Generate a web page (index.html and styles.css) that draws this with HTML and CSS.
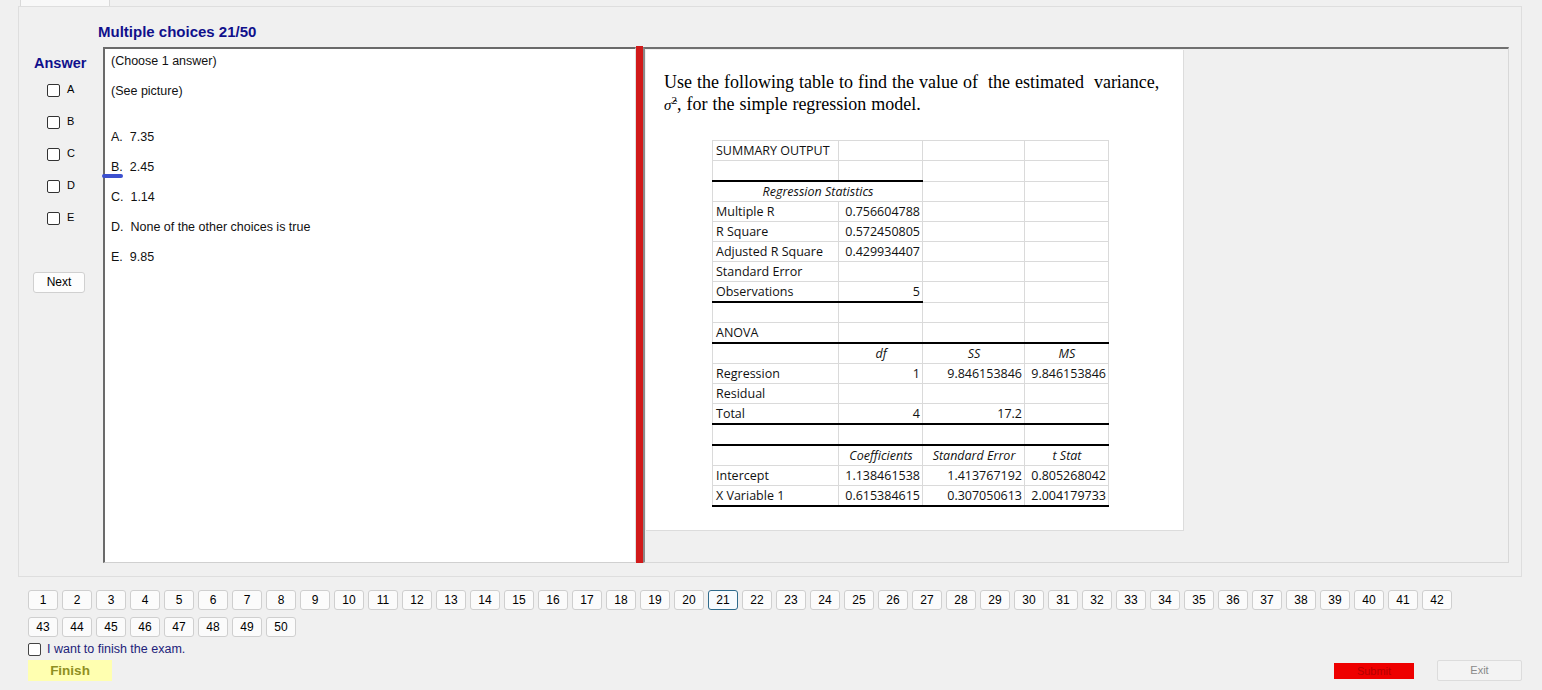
FILE: index.html
```html
<!DOCTYPE html>
<html>
<head>
<meta charset="utf-8">
<link rel="stylesheet" href="styles.css">
</head>
<body>
<div class="tabs"><div class="tab"></div></div>
<div class="panel">
  <div class="title">Multiple choices 21/50</div>
  <div class="work">
    <div class="answers">
      <div class="answer-label">Answer</div>
      <div class="checks">
        <label class="check"><span class="box"></span><span class="letter">A</span></label>
        <label class="check"><span class="box"></span><span class="letter">B</span></label>
        <label class="check"><span class="box"></span><span class="letter">C</span></label>
        <label class="check"><span class="box"></span><span class="letter">D</span></label>
        <label class="check"><span class="box"></span><span class="letter">E</span></label>
      </div>
      <div class="btn next">Next</div>
    </div>
    <div class="question">
      <div class="line">(Choose 1 answer)</div>
      <div class="line">(See picture)</div>
      <div class="options">
        <div class="line">A.&nbsp; 7.35</div>
        <div class="line">B.&nbsp; 2.45</div>
        <div class="line">C.&nbsp; 1.14</div>
        <div class="line">D.&nbsp; None of the other choices is true</div>
        <div class="line">E.&nbsp; 9.85</div>
      </div>
      <span class="ink"></span>
    </div>
    <div class="splitter"></div>
    <div class="picture-pane">
      <div class="picture">
        <div class="prompt">Use the following table to find the value of&nbsp; the estimated&nbsp; variance,<br><span class="sig">σ̂<sup>2</sup></span>, for the simple regression model.</div>
        <table class="sheet">
          <colgroup><col class="c1"><col class="c2"><col class="c3"><col class="c4"></colgroup>
          <tr><td>SUMMARY OUTPUT</td><td></td><td></td><td></td></tr>
          <tr><td></td><td></td><td></td><td></td></tr>
          <tr class="tt"><td colspan="2" class="hd">Regression Statistics</td><td class="nb"></td><td></td></tr>
          <tr><td>Multiple R</td><td class="n">0.756604788</td><td></td><td></td></tr>
          <tr><td>R Square</td><td class="n">0.572450805</td><td></td><td></td></tr>
          <tr><td>Adjusted R Square</td><td class="n">0.429934407</td><td></td><td></td></tr>
          <tr><td>Standard Error</td><td class="n"></td><td></td><td></td></tr>
          <tr class="bb2"><td>Observations</td><td class="n">5</td><td class="nb"></td><td></td></tr>
          <tr><td></td><td></td><td></td><td></td></tr>
          <tr><td>ANOVA</td><td></td><td></td><td></td></tr>
          <tr class="ta"><td></td><td class="hd">df</td><td class="hd">SS</td><td class="hd">MS</td></tr>
          <tr><td>Regression</td><td class="n">1</td><td class="n">9.846153846</td><td class="n">9.846153846</td></tr>
          <tr><td>Residual</td><td></td><td></td><td></td></tr>
          <tr class="ba"><td>Total</td><td class="n">4</td><td class="n">17.2</td><td></td></tr>
          <tr><td></td><td></td><td></td><td></td></tr>
          <tr class="ta"><td></td><td class="hd">Coefficients</td><td class="hd">Standard Error</td><td class="hd">t Stat</td></tr>
          <tr><td>Intercept</td><td class="n">1.138461538</td><td class="n">1.413767192</td><td class="n">0.805268042</td></tr>
          <tr class="ba"><td>X Variable 1</td><td class="n">0.615384615</td><td class="n">0.307050613</td><td class="n">2.004179733</td></tr>
        </table>
      </div>
    </div>
  </div>
</div>
<div class="footer">
  <div class="numbers">
    <div class="num">1</div><div class="num">2</div><div class="num">3</div><div class="num">4</div><div class="num">5</div><div class="num">6</div><div class="num">7</div><div class="num">8</div><div class="num">9</div><div class="num">10</div>
    <div class="num">11</div><div class="num">12</div><div class="num">13</div><div class="num">14</div><div class="num">15</div><div class="num">16</div><div class="num">17</div><div class="num">18</div><div class="num">19</div><div class="num">20</div>
    <div class="num current">21</div><div class="num">22</div><div class="num">23</div><div class="num">24</div><div class="num">25</div><div class="num">26</div><div class="num">27</div><div class="num">28</div><div class="num">29</div><div class="num">30</div>
    <div class="num">31</div><div class="num">32</div><div class="num">33</div><div class="num">34</div><div class="num">35</div><div class="num">36</div><div class="num">37</div><div class="num">38</div><div class="num">39</div><div class="num">40</div>
    <div class="num">41</div><div class="num">42</div><div class="num">43</div><div class="num">44</div><div class="num">45</div><div class="num">46</div><div class="num">47</div><div class="num">48</div><div class="num">49</div><div class="num">50</div>
  </div>
  <label class="finish-check"><span class="box"></span><span>I want to finish the exam.</span></label>
  <div class="actions">
    <div class="finish">Finish</div>
    <div class="submit">Submit</div>
    <div class="exit">Exit</div>
  </div>
</div>
</body>
</html>
```
FILE: styles.css
```css
html, body {
  margin: 0;
  padding: 0;
}
body {
  width: 1542px;
  height: 690px;
  overflow: hidden;
  background: #f0f0f0;
  font-family: "Liberation Sans", Arial, sans-serif;
  color: #000;
}
.tabs {
  height: 6px;
  display: flex;
}
.tab {
  margin-left: 20px;
  width: 90px;
  height: 6px;
  background: #f8f8f8;
  border-left: 1px solid #d9d9d9;
  border-right: 1px solid #d9d9d9;
  box-sizing: border-box;
}
.panel {
  margin-left: 18px;
  width: 1504px;
  height: 571px;
  box-sizing: border-box;
  border: 1px solid #dedede;
  background: #f0f0f0;
}
.title {
  height: 40px;
  box-sizing: border-box;
  padding: 17px 0 0 79px;
  line-height: 16px;
  font-size: 15px;
  font-weight: bold;
  color: #10108c;
}
.work {
  display: flex;
  height: 516px;
}
.answers {
  width: 84px;
  flex: none;
  display: flex;
  flex-direction: column;
}
.answer-label {
  margin-top: 8px;
  height: 16px;
  line-height: 16px;
  padding-left: 15px;
  font-size: 14.5px;
  font-weight: bold;
  color: #10108c;
}
.checks {
  margin-top: 3px;
  display: flex;
  flex-direction: column;
}
.check {
  height: 32px;
  display: flex;
  align-items: center;
  padding-left: 28px;
  font-size: 11px;
}
.box {
  width: 11px;
  height: 11px;
  border: 1px solid #333;
  border-radius: 2px;
  background: #fff;
  flex: none;
}
.letter {
  margin-left: 7px;
  margin-top: -3px;
}
.btn {
  box-sizing: border-box;
  background: #fdfdfd;
  border: 1px solid #d0d0d0;
  border-radius: 3px;
  text-align: center;
  font-size: 12px;
}
.next {
  margin: 38px 0 0 14px;
  width: 52px;
  height: 21px;
  line-height: 19px;
}
.question {
  position: relative;
  width: 533px;
  height: 516px;
  flex: none;
  box-sizing: border-box;
  background: #fff;
  border-top: 2px solid #6a6a6a;
  border-left: 2px solid #6a6a6a;
  border-right: 1px solid #e0e0e0;
  border-bottom: 1px solid #d0d0d0;
  padding: 4px 0 0 6px;
  font-size: 12.5px;
  color: #111;
}
.line {
  height: 16px;
  line-height: 16px;
  margin-bottom: 14px;
  white-space: pre;
}
.options {
  padding-top: 16px;
}
.ink {
  position: absolute;
  left: -3px;
  top: 125px;
  width: 21px;
  height: 4px;
  border-radius: 2px;
  background: #3c50cf;
}
.splitter {
  width: 7px;
  height: 517px;
  margin-top: -1px;
  flex: none;
  background: #d11a1a;
}
.picture-pane {
  width: 866px;
  height: 516px;
  flex: none;
  box-sizing: border-box;
  border-top: 2px solid #707070;
  border-left: 2px solid #8a8a8a;
  border-right: 1px solid #d8d8d8;
  border-bottom: 1px solid #d8d8d8;
  padding: 1px 0 0 1px;
}
.picture {
  width: 538px;
  height: 481px;
  box-sizing: border-box;
  background: #fff;
  border-right: 1px solid #dcdcdc;
  border-bottom: 1px solid #dcdcdc;
  padding: 21px 0 0 18px;
}
.prompt {
  font-family: "Liberation Serif", "Times New Roman", serif;
  font-size: 18px;
  line-height: 22px;
  word-spacing: 0.5px;
  color: #000;
  white-space: nowrap;
}
.sig {
  font-style: italic;
  font-size: 15px;
}
.sig sup {
  font-size: 11px;
  font-style: normal;
  line-height: 0;
}
.sheet {
  margin: 24px 0 0 48px;
  border-collapse: collapse;
  table-layout: fixed;
  font-family: "Open Sans", "Noto Sans", sans-serif;
  font-size: 12.5px;
  color: #111;
}
.c1 { width: 126px; }
.c2 { width: 84px; }
.c3 { width: 102px; }
.c4 { width: 84px; }
.sheet td {
  height: 19px;
  padding: 0 2px 0 3px;
  border: 1px solid #dadada;
  white-space: nowrap;
  overflow: hidden;
  line-height: 18px;
}
.sheet td.n {
  text-align: right;
}
.sheet td.hd {
  text-align: center;
  font-style: italic;
}
.sheet tr.tt td:nth-child(1) {
  border-top: 2px solid #000;
}
.sheet tr.bb2 td:nth-child(1),
.sheet tr.bb2 td:nth-child(2) {
  border-bottom: 2px solid #000;
}
.sheet tr.ta td {
  border-top: 2px solid #000;
}
.sheet tr.ba td {
  border-bottom: 2px solid #000;
}
.footer {
  padding: 13px 0 0 28px;
}
.numbers {
  width: 1430px;
  display: flex;
  flex-wrap: wrap;
  gap: 7px 4px;
}
.num {
  width: 30px;
  height: 20px;
  box-sizing: border-box;
  border: 1px solid #cfcfcf;
  border-radius: 3px;
  background: #fbfbfb;
  text-align: center;
  line-height: 18px;
  font-size: 12px;
}
.num.current {
  border-color: #2f6b8c;
  background: #f7fbfe;
}
.finish-check {
  margin-top: 6px;
  height: 12px;
  display: flex;
  align-items: center;
  font-size: 12.5px;
  color: #22227a;
}
.finish-check .box {
  margin-right: 6px;
  border-color: #444;
}
.actions {
  margin-top: 5px;
  width: 1494px;
  display: flex;
  align-items: center;
}
.finish {
  width: 84px;
  height: 21px;
  line-height: 21px;
  background: #ffffb0;
  text-align: center;
  font-weight: bold;
  font-size: 13.5px;
  color: #8f8f22;
}
.submit {
  margin-left: auto;
  width: 80px;
  height: 16px;
  line-height: 16px;
  background: #ee0000;
  color: #b40000;
  text-align: center;
  font-size: 11px;
}
.exit {
  margin-left: 23px;
  width: 85px;
  height: 21px;
  line-height: 19px;
  box-sizing: border-box;
  border: 1px solid #dcdcdc;
  border-radius: 2px;
  background: #f3f3f3;
  color: #8a8a8a;
  text-align: center;
  font-size: 11px;
}
```
